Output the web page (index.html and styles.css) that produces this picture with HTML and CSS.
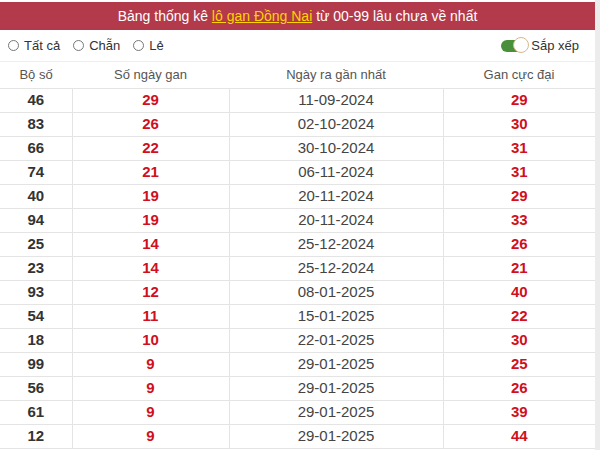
FILE: index.html
```html
<!DOCTYPE html>
<html lang="vi">
<head>
<meta charset="utf-8">
<link rel="stylesheet" href="styles.css">
</head>
<body>
<div class="page">
  <div class="title">Bảng thống kê <a class="hl">lô gan Đồng Nai</a> từ 00-99 lâu chưa về nhất</div>
  <div class="filters">
    <label class="radio"><span class="dot"></span>Tất cả</label>
    <label class="radio"><span class="dot"></span>Chẵn</label>
    <label class="radio"><span class="dot"></span>Lẻ</label>
    <div class="sort"><span class="toggle"><span class="knob"></span></span>Sắp xếp</div>
  </div>
  <table class="tbl">
    <colgroup><col class="c1"><col class="c2"><col class="c3"><col class="c4"></colgroup>
    <thead>
      <tr><th>Bộ số</th><th>Số ngày gan</th><th>Ngày ra gần nhất</th><th>Gan cực đại</th></tr>
    </thead>
    <tbody>
      <tr><td class="num">46</td><td class="red">29</td><td class="date">11-09-2024</td><td class="red">29</td></tr>
      <tr><td class="num">83</td><td class="red">26</td><td class="date">02-10-2024</td><td class="red">30</td></tr>
      <tr><td class="num">66</td><td class="red">22</td><td class="date">30-10-2024</td><td class="red">31</td></tr>
      <tr><td class="num">74</td><td class="red">21</td><td class="date">06-11-2024</td><td class="red">31</td></tr>
      <tr><td class="num">40</td><td class="red">19</td><td class="date">20-11-2024</td><td class="red">29</td></tr>
      <tr><td class="num">94</td><td class="red">19</td><td class="date">20-11-2024</td><td class="red">33</td></tr>
      <tr><td class="num">25</td><td class="red">14</td><td class="date">25-12-2024</td><td class="red">26</td></tr>
      <tr><td class="num">23</td><td class="red">14</td><td class="date">25-12-2024</td><td class="red">21</td></tr>
      <tr><td class="num">93</td><td class="red">12</td><td class="date">08-01-2025</td><td class="red">40</td></tr>
      <tr><td class="num">54</td><td class="red">11</td><td class="date">15-01-2025</td><td class="red">22</td></tr>
      <tr><td class="num">18</td><td class="red">10</td><td class="date">22-01-2025</td><td class="red">30</td></tr>
      <tr><td class="num">99</td><td class="red">9</td><td class="date">29-01-2025</td><td class="red">25</td></tr>
      <tr><td class="num">56</td><td class="red">9</td><td class="date">29-01-2025</td><td class="red">26</td></tr>
      <tr><td class="num">61</td><td class="red">9</td><td class="date">29-01-2025</td><td class="red">39</td></tr>
      <tr><td class="num">12</td><td class="red">9</td><td class="date">29-01-2025</td><td class="red">44</td></tr>
    </tbody>
  </table>
</div>
</body>
</html>
```
FILE: styles.css
```css
html, body {
  margin: 0;
  padding: 0;
  background: #fff;
  overflow: hidden;
}
body {
  font-family: "Liberation Sans", Arial, sans-serif;
  color: #333;
}
.page {
  width: 595px;
  padding-top: 2px;
  border-right: 5px solid #ececec;
  min-height: 450px;
}
.title {
  background: #b23a4a;
  color: #fff;
  font-size: 14px;
  height: 28px;
  line-height: 28px;
  text-align: center;
}
.hl {
  color: #ffd200;
  text-decoration: underline;
}
.filters {
  display: flex;
  align-items: center;
  height: 31px;
  padding-left: 8px;
  font-size: 13px;
  color: #333;
  border-bottom: 1px solid #eee;
}
.radio {
  display: flex;
  align-items: center;
  margin-right: 13px;
}
.dot {
  width: 11px;
  height: 11px;
  border: 1px solid #777;
  border-radius: 50%;
  margin-right: 5px;
  box-sizing: border-box;
}
.sort {
  margin-left: auto;
  margin-right: 16px;
  display: flex;
  align-items: center;
}
.toggle {
  position: relative;
  width: 26px;
  height: 12px;
  background: #4a8f3c;
  border-radius: 6px;
  margin-right: 4px;
}
.knob {
  position: absolute;
  right: -2px;
  top: -3px;
  width: 16px;
  height: 16px;
  border-radius: 50%;
  background: #fff;
  border: 1px solid #d8b98a;
  box-sizing: border-box;
}
.tbl {
  width: 595px;
  border-collapse: collapse;
  font-size: 15px;
  table-layout: fixed;
}
.c1 { width: 72px; }
.c2 { width: 157px; }
.c3 { width: 214px; }
.c4 { width: 152px; }
.tbl th {
  font-weight: normal;
  color: #555;
  font-size: 13px;
  height: 25px;
  padding: 0 0 1px;
  text-align: center;
  border-bottom: 1px solid #e4e4e4;
}
.tbl td {
  height: 22px;
  line-height: 22px;
  padding: 0 0 1px;
  text-align: center;
  border-bottom: 1px solid #e4e4e4;
  border-left: 1px solid #e4e4e4;
}
.tbl td:first-child { border-left: none; }
.num { font-weight: bold; color: #333; }
.red { font-weight: bold; color: #d0101c; }
.date { color: #444; }
```
